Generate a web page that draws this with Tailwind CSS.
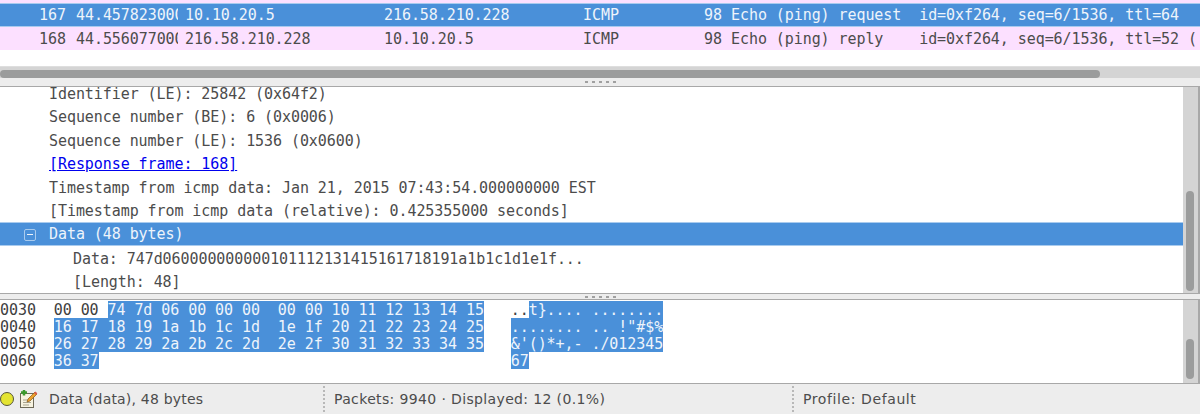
<!DOCTYPE html>
<html>
<head>
  <meta charset="utf-8">
  <script src="https://cdn.jsdelivr.net/npm/@tailwindcss/browser@4"></script>
</head>
<body class="bg-white overflow-hidden">
  <div class="w-[1200px] h-[414px] flex flex-col overflow-hidden text-[#4c4c4c] font-['DejaVu_Sans_Mono',monospace] text-[15px] tracking-[-0.07px]">

    <!-- packet list -->
    <div class="h-[66px] shrink-0 flex flex-col">
      <div class="h-[3px] bg-[#fce0ff]"></div>
      <div class="h-[24px] flex items-center pt-[1px] bg-[#4a90d9] text-[#eef4fb] border-y border-[#a9cbee]">
        <span class="w-[66px] text-right">167</span>
        <span class="ml-[10px] w-[102px] overflow-hidden">44.457823000</span>
        <span class="ml-[7px] w-[199px]">10.10.20.5</span>
        <span class="w-[199px]">216.58.210.228</span>
        <span class="w-[121px]">ICMP</span>
        <span class="w-[18px] text-right">98</span>
        <span class="ml-[9px] whitespace-pre">Echo (ping) request  id=0xf264, seq=6/1536, ttl=64</span>
      </div>
      <div class="h-[23px] flex items-center pt-[2px] bg-[#fce0ff]">
        <span class="w-[66px] text-right">168</span>
        <span class="ml-[10px] w-[102px] overflow-hidden">44.556077000</span>
        <span class="ml-[7px] w-[199px]">216.58.210.228</span>
        <span class="w-[199px]">10.10.20.5</span>
        <span class="w-[121px]">ICMP</span>
        <span class="w-[18px] text-right">98</span>
        <span class="ml-[9px] whitespace-pre">Echo (ping) reply    id=0xf264, seq=6/1536, ttl=52 (</span>
      </div>
    </div>

    <!-- horizontal scrollbar -->
    <div class="h-[12px] shrink-0 bg-[#d4d4d4] border-t border-[#dedede] pt-[3px]">
      <div class="w-[1100px] h-[8px] bg-[#9b9c9c] rounded-full"></div>
    </div>

    <!-- splitter -->
    <div class="h-[9px] shrink-0 bg-[#ededed] border-b border-[#a8a8a8] flex items-center justify-center gap-[4px]">
      <span class="w-[3px] h-[2px] bg-[#a0a0a0]"></span><span class="w-[3px] h-[2px] bg-[#a0a0a0]"></span><span class="w-[3px] h-[2px] bg-[#a0a0a0]"></span><span class="w-[3px] h-[2px] bg-[#a0a0a0]"></span><span class="w-[3px] h-[2px] bg-[#a0a0a0]"></span>
    </div>

    <!-- packet details -->
    <div class="h-[206px] shrink-0 flex border-r-2 border-[#a8a8a8] overflow-hidden">
      <div class="flex-1 overflow-hidden">
        <div class="-mt-[6px] flex flex-col">
          <div class="h-[23.5px] flex items-center pt-[2px] pl-[49px]">Identifier (LE): 25842 (0x64f2)</div>
          <div class="h-[23.5px] flex items-center pt-[2px] pl-[49px]">Sequence number (BE): 6 (0x0006)</div>
          <div class="h-[23.5px] flex items-center pt-[2px] pl-[49px]">Sequence number (LE): 1536 (0x0600)</div>
          <div class="h-[23.5px] flex items-center pt-[2px] pl-[49px]"><span class="text-[#0000ee] underline">[Response frame: 168]</span></div>
          <div class="h-[23.5px] flex items-center pt-[2px] pl-[49px]">Timestamp from icmp data: Jan 21, 2015 07:43:54.000000000 EST</div>
          <div class="h-[23.5px] flex items-center pt-[2px] pl-[49px]">[Timestamp from icmp data (relative): 0.425355000 seconds]</div>
          <div class="h-[24px] flex items-center pt-[1px] bg-[#4a90d9] text-[#eef4fb] border-y border-[#a9cbee]">
            <span class="ml-[24px] w-[12px] h-[12px] border border-[#a9cbee] rounded-[2px] flex items-center justify-center"><span class="w-[6px] h-px bg-[#eef4fb]"></span></span>
            <span class="ml-[13px]">Data (48 bytes)</span>
          </div>
          <div class="h-[23.5px] flex items-center pt-[2px] pl-[73px]">Data: 747d060000000000101112131415161718191a1b1c1d1e1f...</div>
          <div class="h-[23.5px] flex items-center pt-[2px] pl-[73px]">[Length: 48]</div>
        </div>
      </div>
      <div class="w-[15px] shrink-0 bg-[#d4d4d4] pt-[104px] pl-[3px]">
        <div class="w-[8px] h-[100px] rounded-full bg-[#9b9c9c]"></div>
      </div>
    </div>

    <!-- splitter -->
    <div class="h-[7px] shrink-0 bg-[#ededed] border-y border-[#a8a8a8] flex items-center justify-center gap-[4px]">
      <span class="w-[3px] h-[2px] bg-[#a0a0a0]"></span><span class="w-[3px] h-[2px] bg-[#a0a0a0]"></span><span class="w-[3px] h-[2px] bg-[#a0a0a0]"></span><span class="w-[3px] h-[2px] bg-[#a0a0a0]"></span><span class="w-[3px] h-[2px] bg-[#a0a0a0]"></span>
    </div>

    <!-- packet bytes -->
    <div class="h-[84px] shrink-0 flex border-r-2 border-[#a8a8a8] border-b border-b-[#a8a8a8] overflow-hidden tracking-[-0.07px] text-[#404040]">
      <div class="flex-1 flex flex-col pt-[1px] overflow-hidden">
        <div class="h-[17px] flex leading-[19px] whitespace-pre"><span>0030  00 00 </span><span class="bg-[#4a90d9] text-[#eef4fb]">74 7d 06 00 00 00  00 00 10 11 12 13 14 15</span><span>   ..</span><span class="bg-[#4a90d9] text-[#eef4fb]">t}.... ........</span></div>
        <div class="h-[17px] flex leading-[19px] whitespace-pre"><span>0040  </span><span class="bg-[#4a90d9] text-[#eef4fb]">16 17 18 19 1a 1b 1c 1d  1e 1f 20 21 22 23 24 25</span><span>   </span><span class="bg-[#4a90d9] text-[#eef4fb]">........ .. !"#$%</span></div>
        <div class="h-[17px] flex leading-[19px] whitespace-pre"><span>0050  </span><span class="bg-[#4a90d9] text-[#eef4fb]">26 27 28 29 2a 2b 2c 2d  2e 2f 30 31 32 33 34 35</span><span>   </span><span class="bg-[#4a90d9] text-[#eef4fb]">&amp;'()*+,- ./012345</span></div>
        <div class="h-[17px] flex leading-[19px] whitespace-pre"><span>0060  </span><span class="bg-[#4a90d9] text-[#eef4fb]">36 37</span><span>                                              </span><span class="bg-[#4a90d9] text-[#eef4fb]">67</span></div>
      </div>
      <div class="w-[15px] shrink-0 bg-[#d4d4d4] pt-[39px] pl-[3px]">
        <div class="w-[8px] h-[40px] rounded-full bg-[#9b9c9c]"></div>
      </div>
    </div>

    <!-- status bar -->
    <div class="flex-1 flex items-center bg-[#ededed] font-['DejaVu_Sans',sans-serif] text-[14px] text-[#4c4c4c]">
      <svg class="shrink-0 -ml-[1px]" width="16" height="16" viewBox="0 0 16 16"><circle cx="8" cy="8" r="6.5" fill="#e4e432" stroke="#55553a" stroke-width="1"/></svg>
      <svg class="shrink-0 ml-[4px]" width="19" height="20" viewBox="0 0 19 20">
        <rect x="1.5" y="4.5" width="13" height="14" fill="#f7f3e0" stroke="#6e6a58"/>
        <path d="M4 11h8M4 13.5h8M4 16h6" stroke="#a8a490"/>
        <path d="M2 3.5h6M5 1v5.500" stroke="#3c9a2c" stroke-width="2.500"/>
        <path d="M8 13l1-3 7-7 2 2-7 7z" fill="#eba02c" stroke="#8a5a18" stroke-width=".7"/>
        <path d="M15 4l1.500-1.500 1.800 1.800L17 6z" fill="#d85a4a"/>
      </svg>
      <span class="ml-[11px] w-[274px] tracking-[0.2px]">Data (data), 48 bytes</span>
      <span class="w-[2px] h-[26px] border-l-2 border-dotted border-[#b8b8b8]"></span>
      <span class="ml-[9px] w-[458px] tracking-[0.36px]">Packets: 9940 · Displayed: 12 (0.1%)</span>
      <span class="w-[2px] h-[26px] border-l-2 border-dotted border-[#b8b8b8]"></span>
      <span class="ml-[9px] tracking-[0.6px]">Profile: Default</span>
    </div>
  </div>
</body>
</html>
